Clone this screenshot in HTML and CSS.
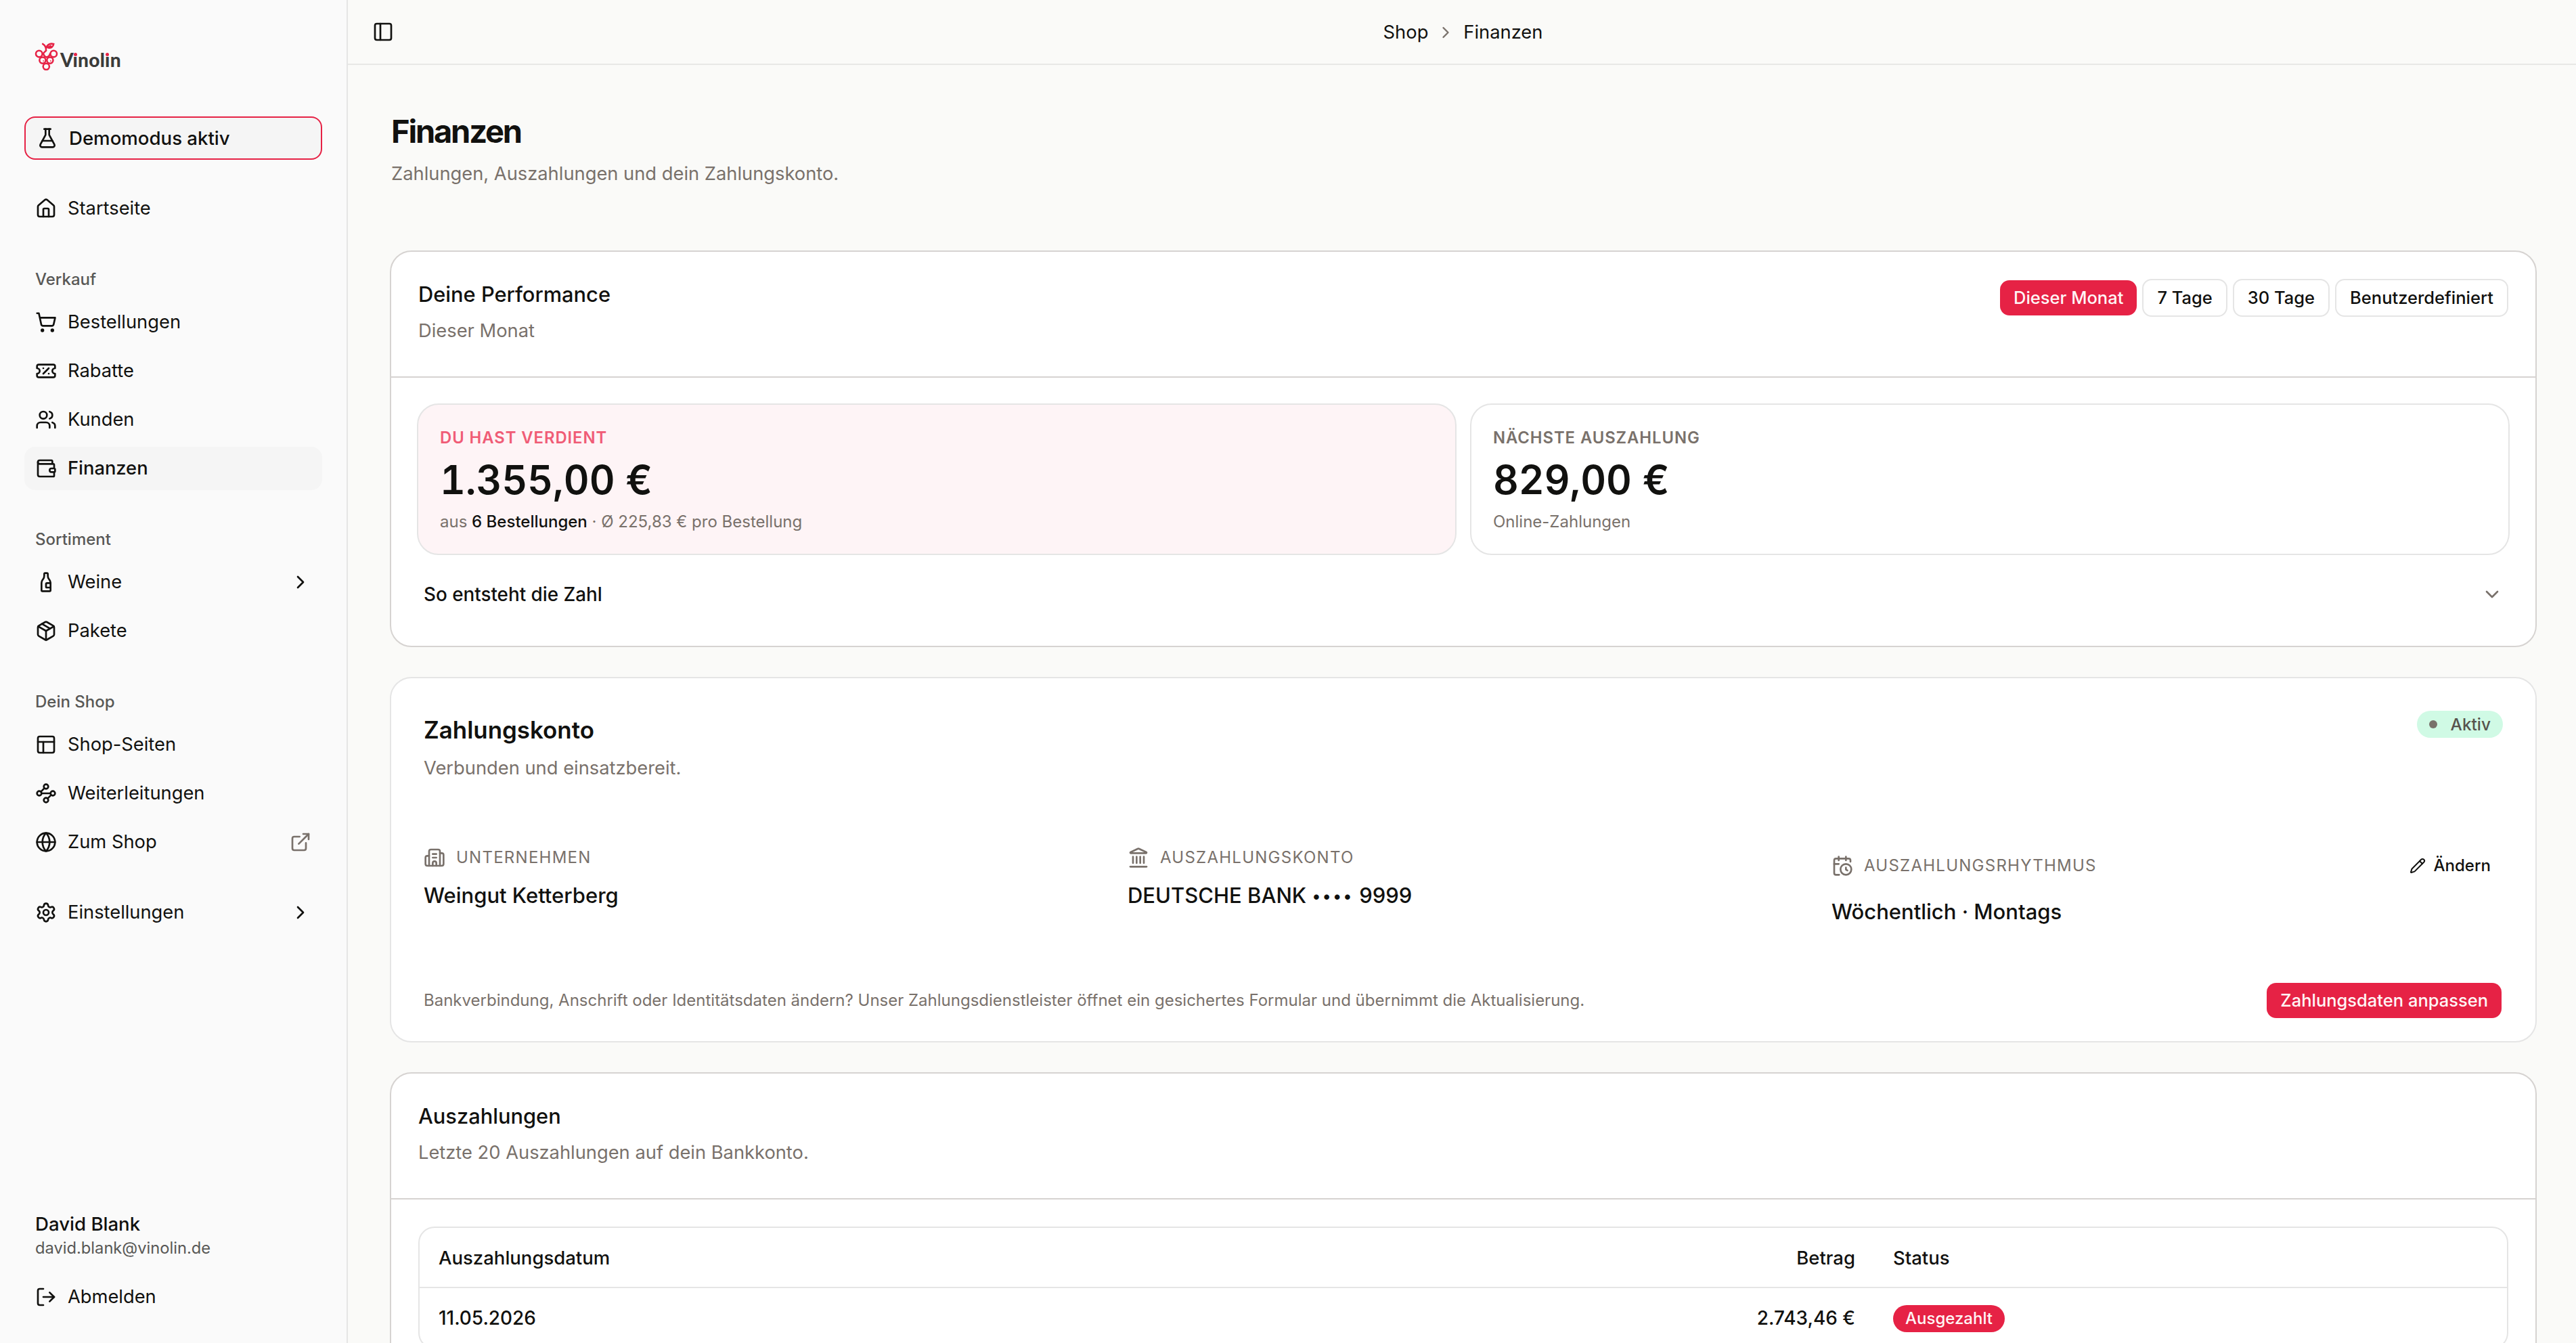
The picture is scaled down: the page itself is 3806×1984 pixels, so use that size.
FILE: index.html
```html
<!DOCTYPE html>
<html lang="de">
<head>
  <meta charset="UTF-8">
  <title>Finanzen</title>
  <link rel="stylesheet" href="styles.css">
</head>
<body>
<svg class="sprite" width="0" height="0">
  <symbol id="flask" viewBox="0 0 24 24"><path d="M14 2v6a2 2 0 0 0 .245.96l5.51 10.08A2 2 0 0 1 18 22H6a2 2 0 0 1-1.755-2.96l5.51-10.08A2 2 0 0 0 10 8V2"/><path d="M6.453 15h11.094"/><path d="M8.5 2h7"/></symbol>
  <symbol id="house" viewBox="0 0 24 24"><path d="M15 21v-8a1 1 0 0 0-1-1h-4a1 1 0 0 0-1 1v8"/><path d="M3 10a2 2 0 0 1 .709-1.528l7-6a2 2 0 0 1 2.582 0l7 6A2 2 0 0 1 21 10v9a2 2 0 0 1-2 2H5a2 2 0 0 1-2-2z"/></symbol>
  <symbol id="cart" viewBox="0 0 24 24"><circle cx="8" cy="21" r="1"/><circle cx="19" cy="21" r="1"/><path d="M2.05 2.05h2l2.66 12.42a2 2 0 0 0 2 1.58h9.78a2 2 0 0 0 1.95-1.57l1.65-7.43H5.12"/></symbol>
  <symbol id="ticket" viewBox="0 0 24 24"><path d="M2 9a3 3 0 1 1 0 6v2a2 2 0 0 0 2 2h16a2 2 0 0 0 2-2v-2a3 3 0 1 1 0-6V7a2 2 0 0 0-2-2H4a2 2 0 0 0-2 2Z"/><path d="M9 9h.01"/><path d="m15 9-6 6"/><path d="M15 15h.01"/></symbol>
  <symbol id="users" viewBox="0 0 24 24"><path d="M16 21v-2a4 4 0 0 0-4-4H6a4 4 0 0 0-4 4v2"/><path d="M16 3.128a4 4 0 0 1 0 7.744"/><path d="M22 21v-2a4 4 0 0 0-3-3.87"/><circle cx="9" cy="7" r="4"/></symbol>
  <symbol id="wallet" viewBox="0 0 24 24"><path d="M19 7V4a1 1 0 0 0-1-1H5a2 2 0 0 0 0 4h15a1 1 0 0 1 1 1v4h-3a2 2 0 0 0 0 4h3a1 1 0 0 0 1-1v-2a1 1 0 0 0-1-1"/><path d="M3 5v14a2 2 0 0 0 2 2h15a1 1 0 0 0 1-1v-4"/></symbol>
  <symbol id="bottle" viewBox="0 0 24 24"><path d="M10 3a1 1 0 0 1 1-1h2a1 1 0 0 1 1 1v2a6 6 0 0 0 1.2 3.6l.6.8A6 6 0 0 1 17 13v8a1 1 0 0 1-1 1H8a1 1 0 0 1-1-1v-8a6 6 0 0 1 1.2-3.6l.6-.8A6 6 0 0 0 10 5z"/><path d="M17 13h-4a1 1 0 0 0-1 1v3a1 1 0 0 0 1 1h4"/></symbol>
  <symbol id="package" viewBox="0 0 24 24"><path d="M11 21.73a2 2 0 0 0 2 0l7-4A2 2 0 0 0 21 16V8a2 2 0 0 0-1-1.73l-7-4a2 2 0 0 0-2 0l-7 4A2 2 0 0 0 3 8v8a2 2 0 0 0 1 1.73z"/><path d="M12 22V12"/><path d="M3.29 7 12 12l8.71-5"/><path d="m7.5 4.27 9 5.15"/></symbol>
  <symbol id="layout" viewBox="0 0 24 24"><rect width="18" height="18" x="3" y="3" rx="2"/><path d="M3 9h18"/><path d="M9 21V9"/></symbol>
  <symbol id="waypoints" viewBox="0 0 24 24"><circle cx="12" cy="4.5" r="2.5"/><path d="m10.2 6.3-3.9 3.9"/><circle cx="4.5" cy="12" r="2.5"/><path d="M7 12h10"/><circle cx="19.5" cy="12" r="2.5"/><path d="m13.8 17.7 3.9-3.9"/><circle cx="12" cy="19.5" r="2.5"/></symbol>
  <symbol id="globe" viewBox="0 0 24 24"><circle cx="12" cy="12" r="10"/><path d="M12 2a14.5 14.5 0 0 0 0 20 14.5 14.5 0 0 0 0-20"/><path d="M2 12h20"/></symbol>
  <symbol id="external" viewBox="0 0 24 24"><path d="M15 3h6v6"/><path d="M10 14 21 3"/><path d="M18 13v6a2 2 0 0 1-2 2H5a2 2 0 0 1-2-2V8a2 2 0 0 1 2-2h6"/></symbol>
  <symbol id="settings" viewBox="0 0 24 24"><path d="M9.671 4.136a2.34 2.34 0 0 1 4.659 0 2.34 2.34 0 0 0 3.319 1.915 2.34 2.34 0 0 1 2.33 4.033 2.34 2.34 0 0 0 0 3.831 2.34 2.34 0 0 1-2.33 4.033 2.34 2.34 0 0 0-3.319 1.915 2.34 2.34 0 0 1-4.659 0 2.34 2.34 0 0 0-3.32-1.915 2.34 2.34 0 0 1-2.33-4.033 2.34 2.34 0 0 0 0-3.831A2.34 2.34 0 0 1 6.35 6.051a2.34 2.34 0 0 0 3.319-1.915"/><circle cx="12" cy="12" r="3"/></symbol>
  <symbol id="logout" viewBox="0 0 24 24"><path d="M9 21H5a2 2 0 0 1-2-2V5a2 2 0 0 1 2-2h4"/><path d="m16 17 5-5-5-5"/><path d="M21 12H9"/></symbol>
  <symbol id="right" viewBox="0 0 24 24"><path d="m9 18 6-6-6-6"/></symbol>
  <symbol id="down" viewBox="0 0 24 24"><path d="m6 9 6 6 6-6"/></symbol>
  <symbol id="panel" viewBox="0 0 24 24"><rect width="18" height="18" x="3" y="3" rx="2"/><path d="M9 3v18"/></symbol>
  <symbol id="building" viewBox="0 0 24 24"><path d="M10 12h4"/><path d="M10 8h4"/><path d="M14 21v-3a2 2 0 0 0-4 0v3"/><path d="M6 10H4a2 2 0 0 0-2 2v7a2 2 0 0 0 2 2h16a2 2 0 0 0 2-2V9a2 2 0 0 0-2-2h-2"/><path d="M6 21V5a2 2 0 0 1 2-2h8a2 2 0 0 1 2 2v16"/></symbol>
  <symbol id="bank" viewBox="0 0 24 24"><path d="M10 18v-7"/><path d="M11.12 2.198a2 2 0 0 1 1.76.006l7.866 3.847c.476.233.31.949-.22.949H3.474c-.53 0-.695-.716-.22-.949z"/><path d="M14 18v-7"/><path d="M18 18v-7"/><path d="M3 22h18"/><path d="M6 18v-7"/></symbol>
  <symbol id="calendar" viewBox="0 0 24 24"><path d="M16 14v2.2l1.6 1"/><path d="M16 2v4"/><path d="M21 7.5V6a2 2 0 0 0-2-2H5a2 2 0 0 0-2 2v14a2 2 0 0 0 2 2h3.5"/><path d="M3 10h5"/><path d="M8 2v4"/><circle cx="16" cy="16" r="6"/></symbol>
  <symbol id="pencil" viewBox="0 0 24 24"><path d="M21.174 6.812a1 1 0 0 0-3.986-3.987L3.842 16.174a2 2 0 0 0-.5.83l-1.321 4.352a.5.5 0 0 0 .623.622l4.353-1.32a2 2 0 0 0 .83-.497z"/><path d="m15 5 4 4"/></symbol>
</svg>

<div class="app">
  <aside class="sidebar">
    <div class="logo">
      <svg class="grapes" viewBox="0 0 34 42" fill="none" stroke="#e62245" stroke-width="2.6" stroke-linecap="round">
        <circle cx="6" cy="17" r="4.9"/><circle cx="28" cy="17" r="4.9"/>
        <circle cx="11.3" cy="26.7" r="4.7"/><circle cx="22.5" cy="26.7" r="4.7"/>
        <circle cx="16.8" cy="36.2" r="4.7"/>
        <path d="M11.5 2C15 4 16.8 7 16.5 12"/><path d="M17 7.500C19 2 23 1 28 2C27.500 6.500 23.500 9 19.500 7.500C20.500 6.200 22 5.500 23.500 5"/>
        <path d="M16.500 12C15.500 14 12.500 14 12.500 17C13.500 20.500 15 21.500 17 22C20 21.500 22 19 22.500 17"/>
        <path d="M12.500 27.500v.4M23.500 27.500v.4" stroke-width="1.600"/>
      </svg>
      <span class="wordmark">V<span class="idot">ı</span>nol<span class="idot">ı</span>n</span>
    </div>
    <a class="nav demo"><svg class="icon"><use href="#flask"/></svg>Demomodus aktiv</a>
    <nav class="group">
      <a class="nav"><svg class="icon"><use href="#house"/></svg>Startseite</a>
    </nav>
    <nav class="group">
      <div class="group-label">Verkauf</div>
      <a class="nav"><svg class="icon"><use href="#cart"/></svg>Bestellungen</a>
      <a class="nav"><svg class="icon"><use href="#ticket"/></svg>Rabatte</a>
      <a class="nav"><svg class="icon"><use href="#users"/></svg>Kunden</a>
      <a class="nav active"><svg class="icon"><use href="#wallet"/></svg>Finanzen</a>
    </nav>
    <nav class="group">
      <div class="group-label">Sortiment</div>
      <a class="nav"><svg class="icon"><use href="#bottle"/></svg>Weine<svg class="icon end"><use href="#right"/></svg></a>
      <a class="nav"><svg class="icon"><use href="#package"/></svg>Pakete</a>
    </nav>
    <nav class="group">
      <div class="group-label">Dein Shop</div>
      <a class="nav"><svg class="icon"><use href="#layout"/></svg>Shop-Seiten</a>
      <a class="nav"><svg class="icon"><use href="#waypoints"/></svg>Weiterleitungen</a>
      <a class="nav"><svg class="icon"><use href="#globe"/></svg>Zum Shop<svg class="icon end muted"><use href="#external"/></svg></a>
    </nav>
    <nav class="group">
      <a class="nav"><svg class="icon"><use href="#settings"/></svg>Einstellungen<svg class="icon end"><use href="#right"/></svg></a>
    </nav>
    <div class="user">
      <div class="user-name">David Blank</div>
      <div class="user-mail">david.blank@vinolin.de</div>
      <a class="nav"><svg class="icon"><use href="#logout"/></svg>Abmelden</a>
    </div>
  </aside>

  <div class="main">
    <header class="topbar">
      <svg class="icon"><use href="#panel"/></svg>
      <div class="breadcrumb">Shop<svg class="icon muted"><use href="#right"/></svg>Finanzen</div>
    </header>
    <main class="content">
      <h1>Finanzen</h1>
      <p class="lead">Zahlungen, Auszahlungen und dein Zahlungskonto.</p>

      <section class="card performance">
        <div class="card-head">
          <div>
            <h2>Deine Performance</h2>
            <p class="sub">Dieser Monat</p>
          </div>
          <div class="ranges">
            <button class="btn primary">Dieser Monat</button>
            <button class="btn">7 Tage</button>
            <button class="btn">30 Tage</button>
            <button class="btn">Benutzerdefiniert</button>
          </div>
        </div>
        <div class="stats">
          <div class="stat earned">
            <div class="stat-label">DU HAST VERDIENT</div>
            <div class="stat-value">1.355,00 €</div>
            <div class="stat-note">aus <b>6 Bestellungen</b> · Ø 225,83 € pro Bestellung</div>
          </div>
          <div class="stat">
            <div class="stat-label">NÄCHSTE AUSZAHLUNG</div>
            <div class="stat-value">829,00 €</div>
            <div class="stat-note">Online-Zahlungen</div>
          </div>
        </div>
        <div class="disclosure">So entsteht die Zahl<svg class="icon muted"><use href="#down"/></svg></div>
      </section>

      <section class="card account">
        <div class="account-head">
          <div>
            <h2>Zahlungskonto</h2>
            <p class="sub">Verbunden und einsatzbereit.</p>
          </div>
          <span class="status"><i></i>Aktiv</span>
        </div>
        <div class="facts">
          <div class="fact">
            <div class="fact-label"><svg class="icon"><use href="#building"/></svg>UNTERNEHMEN</div>
            <div class="fact-value">Weingut Ketterberg</div>
          </div>
          <div class="fact">
            <div class="fact-label"><svg class="icon"><use href="#bank"/></svg>AUSZAHLUNGSKONTO</div>
            <div class="fact-value">DEUTSCHE BANK <span class="mask">••••</span> 9999</div>
          </div>
          <div class="fact rhythm">
            <div class="fact-label"><svg class="icon"><use href="#calendar"/></svg>AUSZAHLUNGSRHYTHMUS
              <a class="edit"><svg class="icon"><use href="#pencil"/></svg>Ändern</a>
            </div>
            <div class="fact-value">Wöchentlich · Montags</div>
          </div>
        </div>
        <div class="account-foot">
          <p>Bankverbindung, Anschrift oder Identitätsdaten ändern? Unser Zahlungsdienstleister öffnet ein gesichertes Formular und übernimmt die Aktualisierung.</p>
          <button class="btn primary">Zahlungsdaten anpassen</button>
        </div>
      </section>

      <section class="card payouts">
        <div class="card-head">
          <div>
            <h2>Auszahlungen</h2>
            <p class="sub">Letzte 20 Auszahlungen auf dein Bankkonto.</p>
          </div>
        </div>
        <div class="table">
          <div class="row head"><span>Auszahlungsdatum</span><span class="amount">Betrag</span><span>Status</span></div>
          <div class="row data"><span>11.05.2026</span><span class="amount">2.743,46 €</span><span><em class="badge">Ausgezahlt</em></span></div>
        </div>
      </section>
    </main>
  </div>
</div>
</body>
</html>
```
FILE: styles.css
```css
* {
  box-sizing: border-box;
}

body {
  margin: 0;
  background: #fafaf8;
  color: #11110f;
  font-family: Inter, "Liberation Sans", sans-serif;
  font-size: 27.3px;
  line-height: 40px;
}

h1, h2, p {
  margin: 0;
}

.sprite {
  position: absolute;
}

.icon {
  width: 32px;
  height: 32px;
  flex: none;
  fill: none;
  stroke: currentColor;
  stroke-width: 2;
  stroke-linecap: round;
  stroke-linejoin: round;
}

.muted {
  color: #79716b;
}

.app {
  display: flex;
  height: 1984px;
  overflow: hidden;
}

/* sidebar */
.sidebar {
  display: flex;
  flex-direction: column;
  width: 514px;
  flex: none;
  padding: 60px 36px 36px;
  border-right: 2px solid #e5e5e5;
  background: #fafafa;
}

.logo {
  display: flex;
  height: 112px;
  padding-left: 15px;
}

.grapes {
  width: 35px;
  height: 41px;
  margin-top: 3px;
}

.wordmark {
  margin: 8px 0 0 3px;
  color: #3b3b3a;
  font-family: Lato, sans-serif;
  font-size: 28px;
  font-weight: 900;
  line-height: 40px;
  letter-spacing: 0.3px;
}

.idot {
  position: relative;
}

.idot::after {
  content: "";
  position: absolute;
  left: 50%;
  top: 7px;
  width: 5px;
  height: 5px;
  margin-left: -2.5px;
  border-radius: 50%;
  background: #e62245;
}

.nav {
  display: flex;
  align-items: center;
  gap: 16px;
  height: 64px;
  padding: 0 16px;
  border-radius: 16px;
}

.nav .end {
  margin-left: auto;
}

.demo {
  border: 2px solid #e62245;
  background: #f5f5f5;
  font-size: 27.6px;
  font-weight: 500;
}

.active {
  background: #f5f5f5;
  font-weight: 500;
}

.group {
  display: flex;
  flex-direction: column;
  gap: 8px;
  margin-top: 40px;
}

.group-label {
  height: 56px;
  padding: 0 16px;
  color: #585856;
  font-size: 24px;
  font-weight: 500;
  line-height: 66px;
}

.user {
  margin-top: auto;
}

.user-name {
  padding-left: 16px;
  font-size: 27.6px;
  font-weight: 500;
}

.user-mail {
  margin-bottom: 24px;
  padding-left: 16px;
  color: #585856;
  font-size: 23.7px;
  line-height: 32px;
}

/* main column */
.main {
  flex: 1;
}

.topbar {
  display: grid;
  grid-template-columns: 1fr auto 1fr;
  align-items: center;
  height: 96px;
  padding: 0 34px 0 36px;
  border-bottom: 2px solid #e8e8e6;
}

.breadcrumb {
  display: flex;
  align-items: center;
  gap: 12px;
  padding: 1px 0 0 1px;
}

.breadcrumb .icon {
  width: 28px;
  height: 28px;
}

.content {
  padding: 72px 58px 0 62px;
}

h1 {
  padding-left: 2px;
  font-size: 47px;
  font-weight: 700;
  line-height: 52px;
  letter-spacing: -2.2px;
}

.lead {
  margin-top: 17px;
  padding-left: 2px;
  color: #79716b;
}

.card {
  border: 2px solid #d6d3d1;
  border-radius: 32px;
  background: #fff;
}

.card-head {
  display: flex;
  justify-content: space-between;
  height: 186px;
  padding: 39px 40px;
  border-bottom: 2px solid #d6d3d1;
}

h2 {
  font-size: 30.8px;
  font-weight: 500;
  line-height: 48px;
}

.sub {
  margin-top: 10px;
  color: #79716b;
}

.ranges {
  display: flex;
  align-items: center;
  gap: 8px;
  height: 56px;
  margin-top: 1px;
}

.btn {
  height: 56px;
  padding: 0 20px;
  border: 2px solid #e5e5e5;
  border-radius: 14px;
  background: #fff;
  color: #11110f;
  font: 500 25.5px/40px Inter, sans-serif;
}

.primary {
  height: 52px;
  border: 0;
  background: #e62245;
  color: #fff5f5;
}

.performance {
  height: 586px;
  margin-top: 93px;
}

.stats {
  display: grid;
  grid-template-columns: 1fr 1fr;
  gap: 20px;
  padding: 38px 38px 0;
}

.stat {
  height: 224px;
  padding: 33px 32px;
  border: 2px solid #e5e5e5;
  border-radius: 32px;
}

.stat-label {
  color: #79716b;
  font-size: 23.8px;
  font-weight: 600;
  line-height: 32px;
  letter-spacing: 0.95px;
}

.stat-value {
  margin-top: 16px;
  font-size: 58.5px;
  font-weight: 600;
  font-variant-numeric: tabular-nums;
  line-height: 60px;
}

.stat-note {
  margin-top: 16px;
  color: #79716b;
  font-size: 24px;
  line-height: 32px;
}

.stat-note b {
  color: #11110f;
  font-weight: 500;
}

.earned {
  background: #fef4f6;
}

.earned .stat-label {
  color: #f05c76;
}

.disclosure {
  display: flex;
  align-items: center;
  justify-content: space-between;
  padding: 38px 48px 0;
  font-size: 27.8px;
  font-weight: 500;
}

/* payment account */
.account {
  height: 540px;
  margin-top: 44px;
  padding: 48px;
  border-color: #e5e5e5;
}

.account-head {
  display: flex;
  justify-content: space-between;
}

.account h2 {
  font-size: 34.9px;
  font-weight: 600;
  line-height: 56px;
}

.account .sub {
  margin-top: 9px;
}

.status {
  display: flex;
  align-items: center;
  height: 40px;
  padding: 0 18px;
  border-radius: 20px;
  background: #d0fae5;
  color: #57534d;
  font-size: 24.4px;
  font-weight: 500;
}

.status i {
  width: 12px;
  height: 12px;
  margin-right: 20px;
  border-radius: 50%;
  background: #79716b;
}

.facts {
  display: grid;
  grid-template-columns: repeat(3, 1fr);
  gap: 48px;
  margin-top: 92px;
}

.fact-label {
  display: flex;
  align-items: center;
  gap: 16px;
  height: 40px;
  color: #79716b;
  font-size: 24px;
  letter-spacing: 1.25px;
}

.fact-value {
  margin-top: 12px;
  font-size: 31px;
  font-weight: 500;
  line-height: 48px;
}

.mask {
  font-size: 24px;
  letter-spacing: 2.6px;
  vertical-align: 2px;
}

.rhythm .fact-label {
  height: 64px;
}

.edit {
  display: flex;
  align-items: center;
  gap: 12px;
  margin-left: auto;
  padding-right: 18px;
  color: #11110f;
  font-weight: 500;
  letter-spacing: 0;
}

.edit .icon {
  width: 24px;
  height: 24px;
}

.account-foot {
  display: flex;
  align-items: center;
  justify-content: space-between;
  margin-top: 81px;
  padding-right: 2px;
  color: #79716b;
  font-size: 24px;
}

/* payouts */
.payouts {
  height: 560px;
  margin-top: 44px;
}

.table {
  margin: 40px 40px 0;
  border: 2px solid #e5e5e5;
  border-radius: 24px;
}

.row {
  display: grid;
  grid-template-columns: 1677px 472px 1fr;
  align-items: center;
  height: 88px;
  padding: 0 28px;
  font-weight: 500;
}

.head {
  height: 89px;
  border-bottom: 2px solid #e5e5e5;
  font-size: 27.5px;
}

.data {
  font-size: 27.9px;
}

/* amounts are right-aligned in the second column */
.amount {
  padding-right: 56px;
  text-align: right;
}

.badge {
  display: inline-block;
  height: 40px;
  padding: 0 18px;
  border-radius: 20px;
  background: #e62245;
  color: #fff5f5;
  font-size: 24px;
  font-style: normal;
}
```
